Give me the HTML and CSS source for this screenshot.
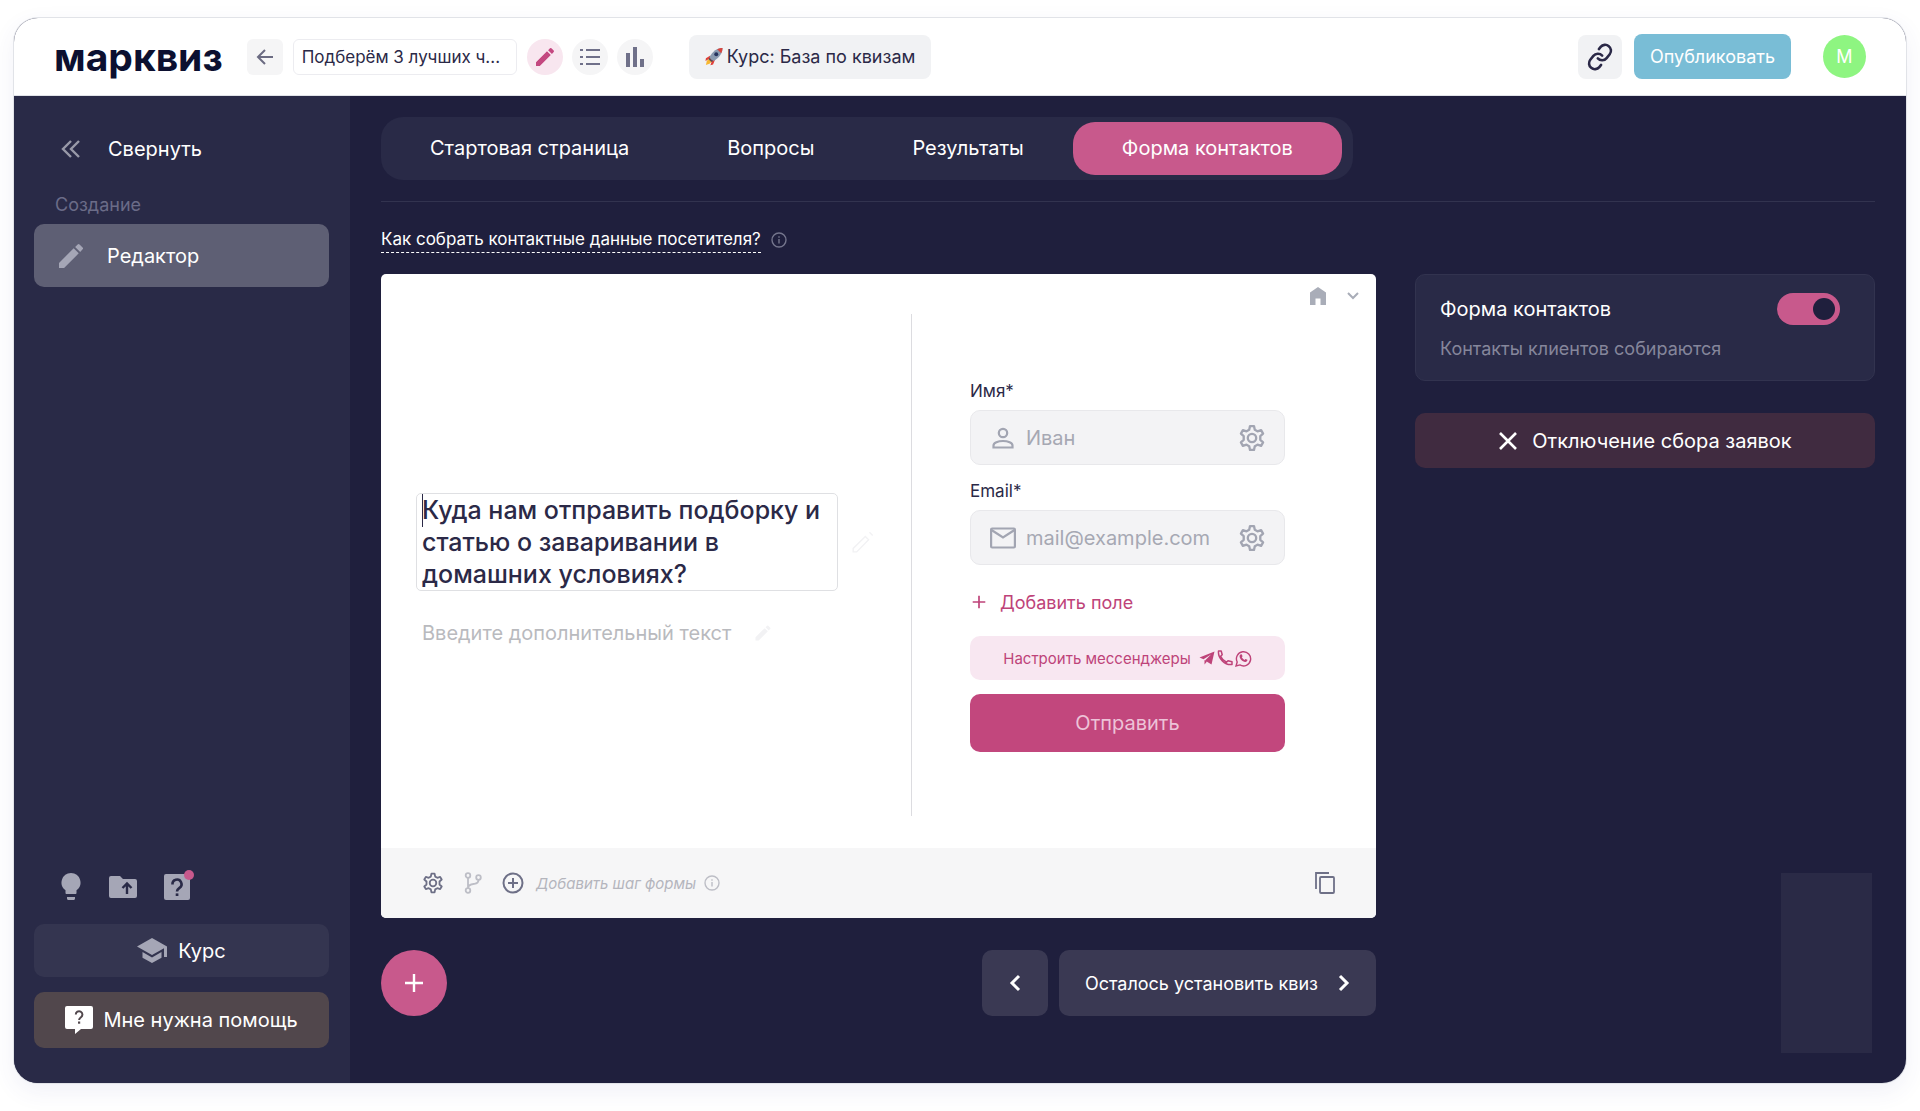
FILE: index.html
```html
<!DOCTYPE html>
<html lang="ru">
<head>
    <meta charset="UTF-8">
    <meta name="viewport" content="width=device-width, initial-scale=1.0">
    <title>Марквиз — Форма контактов</title>
    <link rel="stylesheet" href="styles.css">
</head>
<body>
    <!-- Shared icons -->
    <svg class="sprite" aria-hidden="true">
        <symbol id="pencil" viewBox="0 0 24 24">
            <path d="M3 17.2V21h3.8L17.8 10l-3.8-3.8zM20.7 7a1 1 0 0 0 0-1.4l-2.3-2.3a1 1 0 0 0-1.4 0l-1.9 1.9L18.900 9z" fill="currentColor"/>
        </symbol>
        <symbol id="gear" viewBox="0 0 24 24">
            <path d="M10.300 1.800h3.400l.7 3.200 2.300 1.300 3.100-1 1.700 2.900-2.400 2.200v3.200l2.400 2.200-1.700 2.900-3.100-1-2.300 1.300-.7 3.200h-3.400l-.7-3.200-2.300-1.300-3.100 1-1.700-2.900 2.400-2.200v-3.200L2.500 8.200l1.700-2.900 3.100 1L9.600 5z" fill="none" stroke="currentColor" stroke-width="2" stroke-linejoin="round"/>
            <circle cx="12" cy="12" r="3.600" fill="none" stroke="currentColor" stroke-width="2"/>
        </symbol>
        <symbol id="info" viewBox="0 0 16 16">
            <circle cx="8" cy="8" r="7" fill="none" stroke="currentColor" stroke-width="1.400"/>
            <path d="M8 7v4.500M8 4.300v1.400" stroke="currentColor" stroke-width="1.400"/>
        </symbol>
        <symbol id="plus" viewBox="0 0 20 20">
            <path d="M10 1v18M1 10h18" stroke="currentColor" stroke-width="2.400"/>
        </symbol>
    </svg>

    <div class="window">
        <header class="topbar">
            <a href="#" class="logo">марквиз</a>
            <button class="back-btn" aria-label="Назад">
                <svg width="18" height="18" viewBox="0 0 18 18"><path d="M17 9H2M9 2L2 9l7 7" fill="none" stroke="currentColor" stroke-width="2"/></svg>
            </button>
            <input class="quiz-name" type="text" value="Подберём 3 лучших ч..." aria-label="Название квиза">
            <div class="modes">
                <button class="round-btn active" aria-label="Редактор">
                    <svg width="24" height="24"><use href="#pencil"/></svg>
                </button>
                <button class="round-btn" aria-label="Заявки">
                    <svg width="20" height="18" viewBox="0 0 20 18"><path d="M6 2h14M6 9h14M6 16h14M0 2h3M0 9h3M0 16h3" stroke="currentColor" stroke-width="2"/></svg>
                </button>
                <button class="round-btn" aria-label="Аналитика">
                    <svg width="20" height="22" viewBox="0 0 20 22"><path d="M3 21V7M10 21V1M17 21v-8" stroke="currentColor" stroke-width="4"/></svg>
                </button>
            </div>
            <button class="course-link">
                <svg width="18" height="19" viewBox="0 0 20 20">
                    <path d="M6 9L1 12l-.5 3L6 12zM11 14l-2 5-3 .8L8 14z" fill="#e0413a"/>
                    <path d="M5 12l-3 3-1 4.500L5 18l3-3z" fill="#f7b731"/>
                    <path d="M19.500.5C14 .5 8 4 5 11l4 4c7-3 10.500-9 10.500-14.500z" fill="#8a9bb0"/>
                    <path d="M19.500.5c-2 0-4 .4-6 1.500l4.500 4.500c1-2 1.500-4 1.500-6z" fill="#d8453e"/>
                    <path d="M5 11l-1 2 3 3 2-1z" fill="#5a4a55"/>
                    <circle cx="12.500" cy="7.500" r="2.200" fill="#26345e"/>
                </svg>
                Курс: База по квизам
            </button>
            <div class="account">
                <button class="link-btn" aria-label="Скопировать ссылку">
                    <svg width="28" height="28" viewBox="0 0 24 24" fill="none" stroke="currentColor" stroke-width="2.200" stroke-linecap="round"><path d="M10 13a5 5 0 0 0 7.540.54l3-3a5 5 0 0 0-7.070-7.070l-1.720 1.710" transform="rotate(-6 12 12)"/><path d="M14 11a5 5 0 0 0-7.540-.54l-3 3a5 5 0 0 0 7.070 7.070l1.710-1.710" transform="rotate(-6 12 12)"/></svg>
                </button>
                <button class="publish-btn">Опубликовать</button>
                <button class="avatar">M</button>
            </div>
        </header>

        <div class="layout">
            <aside class="sidebar">
                <button class="collapse-btn">
                    <svg width="20" height="20" viewBox="0 0 20 20"><path d="M10 2L2 10l8 8M18 2l-8 8 8 8" fill="none" stroke="currentColor" stroke-width="2.400"/></svg>
                    Свернуть
                </button>
                <p class="nav-title">Создание</p>
                <a href="#editor" class="nav-item">
                    <svg width="32" height="32"><use href="#pencil"/></svg>
                    Редактор
                </a>

                <div class="tools">
                    <button aria-label="Идеи">
                        <svg width="22" height="28" viewBox="0 0 22 28" fill="currentColor"><path d="M11 0a9.500 9.500 0 0 0-5.500 17.200V20c0 .6.500 1 1 1h9c.5 0 1-.4 1-1v-2.800A9.500 9.500 0 0 0 11 0zM7 24h8v1.500c0 .8-.6 1.500-1.500 1.500h-5C7.600 27 7 26.300 7 25.500z"/></svg>
                    </button>
                    <button aria-label="Загрузки">
                        <svg width="28" height="24" viewBox="0 0 28 24"><path d="M2 1h9l3 3h12a2 2 0 0 1 2 2v15a2 2 0 0 1-2 2H2a2 2 0 0 1-2-2V3a2 2 0 0 1 2-2z" fill="currentColor"/><path d="M18 19V9M13.500 13L18 8.500l4.500 4.500" fill="none" stroke="#292a47" stroke-width="2.400"/></svg>
                    </button>
                    <button class="faq" aria-label="Вопросы и ответы">
                        <svg width="26" height="26" viewBox="0 0 26 26"><rect x="0" y="0" width="26" height="26" rx="2" fill="currentColor"/><path d="M8.500 10.500a4.500 4.500 0 1 1 7 3.300c-1.600 1.100-2.500 1.800-2.500 3.700" fill="none" stroke="#292a47" stroke-width="2.600"/><path d="M11.700 19.400h2.700v2.600h-2.700z" fill="#292a47"/></svg>
                        <span class="dot"></span>
                    </button>
                </div>
                <button class="course-btn">
                    <svg width="30" height="26" viewBox="0 0 30 26" fill="currentColor"><path d="M15 0L0 8.500 15 17l12-6.800V19h3V8.500zM5.500 14v5.800L15 25l9.500-5.200V14L15 19.500z"/></svg>
                    Курс
                </button>
                <button class="help-btn">
                    <svg width="28" height="28" viewBox="0 0 28 28"><path d="M2 0h24a2 2 0 0 1 2 2v19a2 2 0 0 1-2 2H16l-6 5v-5H2a2 2 0 0 1-2-2V2a2 2 0 0 1 2-2z" fill="#fff"/><path d="M10.800 8.500a3.300 3.300 0 1 1 5.200 2.700c-1.300.9-1.900 1.400-1.900 2.800" fill="none" stroke="#51474c" stroke-width="2"/><path d="M13 15.500h2.200v2.200H13z" fill="#51474c"/></svg>
                    Мне нужна помощь
                </button>
            </aside>

            <main class="content">
                <nav class="tabs">
                    <a href="#start">Стартовая страница</a>
                    <a href="#questions">Вопросы</a>
                    <a href="#results">Результаты</a>
                    <a href="#contacts" class="active">Форма контактов</a>
                </nav>

                <div class="hint">
                    <a href="#how">Как собрать контактные данные посетителя?</a>
                    <svg width="16" height="16"><use href="#info"/></svg>
                </div>

                <div class="columns">
                    <section class="editor">
                        <div class="card">
                            <div class="card-top">
                                <button aria-label="Домой">
                                    <svg width="18" height="18" viewBox="0 0 18 18"><path d="M9 0l8 5.500V18h-5.500v-6.500h-5V18H1V5.500z" fill="currentColor"/></svg>
                                </button>
                                <button aria-label="Развернуть">
                                    <svg width="12" height="8" viewBox="0 0 12 8"><path d="M1 1l5 5 5-5" fill="none" stroke="currentColor" stroke-width="2"/></svg>
                                </button>
                            </div>
                            <div class="card-body">
                                <div class="intro">
                                    <div class="title-row">
                                        <div class="title-box">
                                            <span class="caret"></span>
                                            <textarea class="title" rows="3" aria-label="Заголовок формы">Куда нам отправить подборку и статью о заваривании в домашних условиях?</textarea>
                                        </div>
                                        <svg class="faint" width="28" height="28" viewBox="0 0 24 24" fill="none" stroke="currentColor" stroke-width="1.200"><path d="M3.600 17.500v3h3L16.800 10l-2.800-2.800zM20.300 6.500L17.500 3.700"/></svg>
                                    </div>
                                    <div class="subtitle-row">
                                        <input class="subtitle" type="text" placeholder="Введите дополнительный текст" aria-label="Дополнительный текст">
                                        <svg class="faint" width="20" height="20"><use href="#pencil"/></svg>
                                    </div>
                                </div>
                                <form class="form">
                                    <label for="name">Имя*</label>
                                    <div class="field">
                                        <svg width="26" height="26" viewBox="0 0 26 26" fill="none" stroke="currentColor" stroke-width="2.200"><circle cx="13" cy="8" r="4.200"/><path d="M3.500 22.500v-2c0-2.500 4.500-4.500 9.500-4.500s9.500 2 9.500 4.500v2z"/></svg>
                                        <input id="name" type="text" placeholder="Иван">
                                        <button type="button" aria-label="Настроить имя"><svg width="28" height="28"><use href="#gear"/></svg></button>
                                    </div>
                                    <label for="email">Email*</label>
                                    <div class="field">
                                        <svg width="26" height="26" viewBox="0 0 26 26" fill="none" stroke="currentColor" stroke-width="2.200"><rect x="1.100" y="3.500" width="23.800" height="19" rx="1"/><path d="M1.500 5L13 12.500 24.500 5"/></svg>
                                        <input id="email" type="email" placeholder="mail@example.com">
                                        <button type="button" aria-label="Настроить email"><svg width="28" height="28"><use href="#gear"/></svg></button>
                                    </div>
                                    <button type="button" class="add-field">
                                        <svg width="14" height="14"><use href="#plus"/></svg>
                                        Добавить поле
                                    </button>
                                    <button type="button" class="messengers">
                                        Настроить мессенджеры
                                        <span class="messenger-icons">
                                            <svg width="16" height="16" viewBox="0 0 16 16" fill="currentColor"><path d="M15.500 1.500L.5 7.500l4 1.700L12 4.500l-6 6 6.500 4z"/><path d="M5.500 10v4.500l2.500-3z"/></svg>
                                            <svg width="16" height="16" viewBox="0 0 16 16" fill="none" stroke="currentColor" stroke-width="1.500" stroke-linejoin="round"><path d="M1.500 1h2.700l1 3.800-1.600 1.500c1.200 2.600 3.100 4.700 5.900 6l1.500-1.500 4 1V14.500C8 15.500.7 8.500 1.500 1z"/></svg>
                                            <svg width="17" height="17" viewBox="0 0 17 17"><path d="M1 16l1.200-4a7.100 7.100 0 1 1 2.700 2.900z" fill="none" stroke="currentColor" stroke-width="1.400"/><path d="M5.500 4.500l1.200-.2.900 2-.8 1c.6 1.200 1.500 2 2.700 2.600l.9-1 2 .9c.1 1.500-1 2.200-2.200 2.100-2.900-.4-5.400-3-5.600-5.400-.1-.8.300-1.600.9-2z" fill="currentColor"/></svg>
                                        </span>
                                    </button>
                                    <button type="submit" class="submit-btn">Отправить</button>
                                </form>
                            </div>
                            <div class="card-footer">
                                <button aria-label="Настройки"><svg width="22" height="22"><use href="#gear"/></svg></button>
                                <button class="muted" aria-label="Ветвление">
                                    <svg width="18" height="22" viewBox="0 0 18 22" fill="none" stroke="currentColor" stroke-width="1.800"><circle cx="4" cy="3.500" r="2.300"/><circle cx="4" cy="18.500" r="2.300"/><circle cx="14.500" cy="5.500" r="2.300"/><path d="M4 6v10M14.500 8c0 4-3 3.500-5.500 4-3 .5-5 1.500-5 4"/></svg>
                                </button>
                                <button class="add-step">
                                    <svg width="22" height="22" viewBox="0 0 22 22" fill="none" stroke="currentColor" stroke-width="2"><circle cx="11" cy="11" r="9.500"/><path d="M11 6v10M6 11h10"/></svg>
                                    <em>Добавить шаг формы</em>
                                </button>
                                <svg class="muted" width="16" height="16"><use href="#info"/></svg>
                                <button class="copy-btn" aria-label="Дублировать">
                                    <svg width="20" height="22" viewBox="0 0 20 22" fill="none" stroke="currentColor" stroke-width="1.800"><path d="M14 1H1v16"/><rect x="5" y="5" width="14" height="16" rx="1"/></svg>
                                </button>
                            </div>
                        </div>
                        <div class="actions">
                            <button class="fab" aria-label="Добавить"><svg width="20" height="20"><use href="#plus"/></svg></button>
                            <button class="prev-btn" aria-label="Назад">
                                <svg width="12" height="18" viewBox="0 0 12 18"><path d="M10 2L3 9l7 7" fill="none" stroke="currentColor" stroke-width="3"/></svg>
                            </button>
                            <button class="next-btn">
                                Осталось установить квиз
                                <svg width="12" height="18" viewBox="0 0 12 18"><path d="M2 2l7 7-7 7" fill="none" stroke="currentColor" stroke-width="3"/></svg>
                            </button>
                        </div>
                    </section>

                    <aside class="settings">
                        <div class="toggle-card">
                            <div class="toggle-row">
                                <label for="collect">Форма контактов</label>
                                <input id="collect" class="switch" type="checkbox" checked>
                            </div>
                            <p>Контакты клиентов собираются</p>
                        </div>
                        <button class="disable-btn">
                            <svg width="20" height="20" viewBox="0 0 20 20"><path d="M2 2l16 16M18 2L2 18" stroke="currentColor" stroke-width="2.600"/></svg>
                            Отключение сбора заявок
                        </button>
                        <div class="widget"></div>
                    </aside>
                </div>
            </main>
        </div>
    </div>
</body>
</html>
```
FILE: styles.css
```css
* {
    margin: 0;
    padding: 0;
    box-sizing: border-box;
}

body {
    display: flex;
    min-height: 100vh;
    padding: 18px 14px 28px;
    background-color: #fff;
    font-family: 'Inter', 'Noto Sans', sans-serif;
    color: #fff;
}

button, input, textarea {
    font: inherit;
    color: inherit;
    border: none;
    background: none;
    outline: none;
}

button {
    display: flex;
    align-items: center;
    justify-content: center;
    white-space: nowrap;
    cursor: pointer;
}

a {
    color: inherit;
    text-decoration: none;
}

svg {
    flex-shrink: 0;
}

.sprite {
    position: absolute;
    width: 0;
    height: 0;
}

.window {
    flex: 1;
    display: flex;
    flex-direction: column;
    min-width: 0;
    border-radius: 24px;
    overflow: hidden;
    background-color: #1f1f3d;
    box-shadow: 0 0 0 1px #e1e3e8, 0 8px 24px rgba(60, 70, 150, 0.08);
}

/* Top bar */
.topbar {
    display: flex;
    align-items: center;
    height: 78px;
    padding: 0 40px;
    background-color: #fff;
    border-bottom: 1px solid #e1e3e8;
    color: #2b2947;
}

.logo {
    margin-right: 24px;
    font-size: 39px;
    font-weight: 700;
    line-height: 44px;
    color: #0c1030;
}

.back-btn {
    width: 36px;
    height: 36px;
    border-radius: 6px;
    background-color: #f5f5f6;
    color: #6b6b82;
}

.quiz-name {
    width: 224px;
    height: 36px;
    margin: 0 10px;
    padding: 0 8px;
    border: 1px solid #ececf0;
    border-radius: 6px;
    font-size: 17px;
}

.modes {
    display: flex;
    gap: 9px;
}

.round-btn {
    width: 36px;
    height: 36px;
    border-radius: 50%;
    background-color: #f5f5f6;
    color: #6f7089;
}

.round-btn.active {
    background-color: #f8e6ef;
    color: #c44880;
}

.course-link {
    gap: 4px;
    height: 44px;
    margin-left: 36px;
    padding: 0 16px;
    border-radius: 8px;
    background-color: #f1f2f4;
    font-size: 18px;
}

.account {
    display: flex;
    align-items: center;
    gap: 12px;
    margin-left: auto;
}

.link-btn {
    width: 44px;
    height: 44px;
    border-radius: 8px;
    background-color: #f1f2f4;
}

.publish-btn {
    height: 45px;
    padding: 0 16px;
    border-radius: 8px;
    background-color: #79bdd6;
    font-size: 18px;
    color: #fff;
}

.avatar {
    width: 43px;
    height: 43px;
    margin-left: 20px;
    border-radius: 50%;
    background-color: #8ef581;
    font-size: 18px;
    color: #fff;
}

/* Sidebar */
.layout {
    flex: 1;
    display: flex;
}

.sidebar {
    display: flex;
    flex-direction: column;
    width: 336px;
    padding: 32px 21px 35px 20px;
    background-color: #292a47;
    font-size: 20px;
}

.collapse-btn {
    justify-content: flex-start;
    gap: 27px;
    height: 42px;
    padding-left: 27px;
}

.collapse-btn svg {
    color: #9899a8;
}

.nav-title {
    margin: 23px 0 7px 21px;
    font-size: 18px;
    line-height: 24px;
    color: #6b6c88;
}

.nav-item {
    display: flex;
    align-items: center;
    gap: 20px;
    height: 63px;
    padding-left: 21px;
    border-radius: 10px;
    background-color: #5e5f74;
}

.nav-item svg,
.tools,
.course-btn svg {
    color: #a5a6b6;
}

.tools {
    display: flex;
    align-items: center;
    gap: 27px;
    margin: auto 0 23px 26px;
}

.faq {
    position: relative;
}

.dot {
    position: absolute;
    top: -4px;
    right: -4px;
    width: 10px;
    height: 10px;
    border-radius: 50%;
    background-color: #c8598c;
}

.course-btn {
    gap: 11px;
    height: 53px;
    margin-bottom: 15px;
    border-radius: 10px;
    background-color: #343550;
}

.help-btn {
    gap: 10px;
    height: 56px;
    border-radius: 10px;
    background-color: #51474c;
}

/* Content */
.content {
    flex: 1;
    display: flex;
    flex-direction: column;
    min-width: 0;
    padding: 21px 31px 30px;
}

.tabs {
    display: flex;
    align-self: flex-start;
    padding: 5px 11px 5px 0;
    border-radius: 22px;
    background-color: #292a47;
    font-size: 20px;
}

.tabs a {
    padding: 0 49px;
    line-height: 53px;
    border-radius: 22px;
}

.tabs .active {
    background-color: #c8598c;
}

.hint {
    display: flex;
    align-items: center;
    gap: 10px;
    margin-top: 21px;
    padding: 24px 0 21px;
    border-top: 1px solid #32334f;
    font-size: 17px;
    color: #74758c;
}

.hint a {
    line-height: 26px;
    border-bottom: 1px dashed #fff;
    color: #fff;
}

.columns {
    flex: 1;
    display: flex;
    gap: 39px;
}

.editor {
    flex: 1;
    min-width: 0;
}

.card {
    border-radius: 5px;
    overflow: hidden;
    background-color: #fff;
    color: #2b2947;
}

.card-top {
    display: flex;
    justify-content: flex-end;
    gap: 20px;
    height: 40px;
    padding: 4px 17px 0;
    color: #a9adb8;
}

.card-body {
    display: flex;
    height: 502px;
    margin-bottom: 32px;
}

.intro {
    flex: 1;
    display: flex;
    flex-direction: column;
    justify-content: center;
    gap: 28px;
    padding: 10px 34px 0 35px;
    border-right: 1px solid #dcdce0;
}

.title-row {
    display: flex;
    align-items: center;
    gap: 11px;
}

.title-box {
    position: relative;
    flex: 1;
    border: 1px solid #dfe0e3;
    border-radius: 5px;
}

.title {
    display: block;
    width: 100%;
    padding: 0 5px;
    font-size: 25px;
    font-weight: 500;
    line-height: 32px;
    resize: none;
    overflow: hidden;
}

.caret {
    position: absolute;
    top: 0;
    left: 5px;
    width: 1px;
    height: 33px;
    background-color: #2b2947;
}

.faint {
    color: #f2f2f4;
}

.subtitle-row {
    display: flex;
    align-items: center;
    gap: 15px;
    padding-left: 6px;
}

.subtitle {
    width: 316px;
    height: 28px;
    font-size: 20px;
}

::placeholder {
    color: #a6a8b3;
    opacity: 1;
}

.subtitle::placeholder {
    color: #b9babe;
}

.form {
    display: flex;
    flex-direction: column;
    width: 464px;
    padding: 65px 91px 0 58px;
}

.form label {
    margin-bottom: 7px;
    font-size: 17px;
    line-height: 24px;
}

.field {
    display: flex;
    align-items: center;
    gap: 10px;
    height: 55px;
    margin-bottom: 14px;
    padding: 0 18px 0 19px;
    border: 1px solid #e8e8eb;
    border-radius: 10px;
    background-color: #f3f3f5;
    color: #a2a5b2;
}

.field input {
    flex: 1;
    min-width: 0;
    font-size: 20px;
}

.add-field {
    align-self: flex-start;
    gap: 14px;
    height: 30px;
    margin: 8px 0 19px 2px;
    font-size: 18px;
    color: #be4379;
}

.messengers {
    gap: 8px;
    height: 44px;
    margin-bottom: 14px;
    border-radius: 10px;
    background-color: #f8e7f1;
    font-size: 15px;
    color: #be4379;
}

.messenger-icons {
    display: flex;
    gap: 2px;
}

.submit-btn {
    height: 58px;
    border-radius: 10px;
    background-color: #c2477d;
    font-size: 20px;
    color: #edc3d8;
}

.card-footer {
    display: flex;
    align-items: center;
    gap: 14px;
    height: 70px;
    padding: 0 41px;
    background-color: #f6f6f7;
    color: #6e7087;
}

.card-footer button {
    margin-right: 6px;
}

.card-footer .muted {
    color: #bdbec6;
}

.card-footer .add-step {
    gap: 12px;
    margin-right: -6px;
    font-size: 15px;
}

.add-step em {
    color: #b4b5bd;
}

.card-footer .copy-btn {
    margin: 0 0 0 auto;
}

.actions {
    display: flex;
    gap: 11px;
    margin-top: 32px;
    color: #fff;
}

.fab {
    width: 66px;
    height: 66px;
    margin-right: auto;
    border-radius: 50%;
    background-color: #c8598c;
}

.prev-btn,
.next-btn {
    height: 66px;
    border-radius: 10px;
    background-color: #3a3953;
    font-size: 18px;
}

.prev-btn {
    width: 66px;
}

.next-btn {
    gap: 20px;
    padding: 0 26px;
}

/* Right column */
.settings {
    display: flex;
    flex-direction: column;
    width: 460px;
}

.toggle-card {
    padding: 18px 34px 19px 24px;
    border: 1px solid #32334f;
    border-radius: 10px;
    background-color: #292a47;
}

.toggle-row {
    display: flex;
    align-items: center;
    justify-content: space-between;
    font-size: 20px;
}

.toggle-card p {
    margin-top: 12px;
    font-size: 18px;
    line-height: 24px;
    color: #85869b;
}

.switch {
    appearance: none;
    display: flex;
    align-items: center;
    justify-content: flex-end;
    width: 63px;
    height: 32px;
    padding: 0 5px;
    border-radius: 16px;
    background-color: #c8598c;
}

.switch::before {
    content: '';
    width: 22px;
    height: 22px;
    border-radius: 50%;
    background-color: #1f1f3d;
}

.disable-btn {
    gap: 14px;
    height: 55px;
    margin-top: 32px;
    border-radius: 10px;
    background-color: #402b40;
    font-size: 20px;
}

.widget {
    width: 91px;
    height: 180px;
    margin: auto 3px 0 auto;
    background-color: #2a2a46;
}
```
